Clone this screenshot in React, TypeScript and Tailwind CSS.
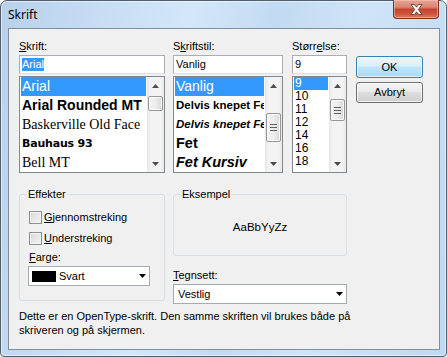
import React from "react";

const sans = "font-['Liberation_Sans',Arial,sans-serif]";
const serif = "font-['Liberation_Serif','Times_New_Roman',serif]";

function Tri({ dir, color = "#4d4d4d" }: { dir: "up" | "down"; color?: string }) {
  return (
    <svg width="7" height="4" viewBox="0 0 7 4">
      {dir === "up" ? <path d="M0 4 L3.5 0 L7 4 Z" fill={color} /> : <path d="M0 0 L7 0 L3.5 4 Z" fill={color} />}
    </svg>
  );
}

function ScrollBar({ thumb, grip }: { thumb: string; grip?: boolean }) {
  return (
    <div className="flex w-[17px] shrink-0 flex-col bg-[linear-gradient(90deg,#e6e6e6_0%,#f3f3f3_20%,#f3f3f3_80%,#e9e9e9_100%)]">
      <div className="flex h-[17px] items-center justify-center">
        <Tri dir="up" />
      </div>
      <div className="flex-1">
        <div
          className={`mx-[1px] flex items-center justify-center rounded-[2px] border border-[#979797] bg-[linear-gradient(90deg,#f4f4f4_0%,#ececec_50%,#d9d9d9_100%)] shadow-[inset_0_0_0_1px_rgba(255,255,255,0.8)] ${thumb}`}
        >
          {grip && (
            <svg width="7" height="7" viewBox="0 0 7 7">
              <path d="M0 0.5H7M0 3.5H7M0 6.5H7" stroke="#5f5f5f" strokeWidth="1" />
            </svg>
          )}
        </div>
      </div>
      <div className="flex h-[17px] items-center justify-center">
        <Tri dir="down" />
      </div>
    </div>
  );
}

function Label({ children, className = "" }: { children: React.ReactNode; className?: string }) {
  return <div className={`h-[13px] text-[11px] leading-[13px] text-black ${className}`}>{children}</div>;
}

function TextBox({ children }: { children: React.ReactNode }) {
  return (
    <div className="mt-[2px] flex h-[19px] items-center border border-[#abadb3] border-b-[#dbdfe6] bg-white pl-[2px] text-[11px] leading-[13px] text-black">
      {children}
    </div>
  );
}

function Combo({ children, className = "" }: { children: React.ReactNode; className?: string }) {
  return (
    <div
      className={`flex h-[20px] items-center justify-between border border-[#a5acb5] bg-white pl-[3px] pr-[3px] text-[11px] leading-[13px] text-black ${className}`}
    >
      <div className="flex items-center">{children}</div>
      <Tri dir="down" color="#000" />
    </div>
  );
}

function CheckRow({ children, className = "" }: { children: React.ReactNode; className?: string }) {
  return (
    <div className={`flex h-[13px] items-center ${className}`}>
      <div className="h-[13px] w-[13px] border border-[#8e8f8f] bg-[linear-gradient(135deg,#d9d9d9_0%,#f2f2f2_100%)] shadow-[inset_0_0_0_1px_#f4f4f4]" />
      <span className="ml-[2px] text-[11px] leading-[13px]">{children}</span>
    </div>
  );
}

export default function App() {
  const fonts = [
    { t: "Arial", c: `${sans} text-[14px]`, sel: true },
    { t: "Arial Rounded MT", c: `${sans} text-[14px] font-bold` },
    { t: "Baskerville Old Face", c: `${serif} text-[14px]` },
    { t: "Bauhaus 93", c: "font-['DejaVu_Sans',sans-serif] text-[11px] font-bold tracking-[-0.2px]" },
    { t: "Bell MT", c: `${serif} text-[14px]` },
  ];
  const styles = [
    { t: "Vanlig", c: "text-[14px]", sel: true },
    { t: "Delvis knepet Fet", c: "text-[11.5px] font-bold" },
    { t: "Delvis knepet Fet Kursiv", c: "text-[11.5px] font-bold italic" },
    { t: "Fet", c: "text-[14.5px] font-bold" },
    { t: "Fet Kursiv", c: "text-[14.5px] font-bold italic" },
  ];
  const sizes = ["9", "10", "11", "12", "14", "16", "18"];

  return (
    <div className={`h-[357px] w-[447px] overflow-hidden bg-white ${sans}`}>
      <div className="flex h-[357px] w-[447px] flex-col rounded-t-[7px] rounded-b-[4px] border border-[#4f5e70] bg-[linear-gradient(100deg,#b8d0ea_0%,#c6ddf4_20%,#d3e7f9_38%,#c2daf2_55%,#cfe4f8_72%,#c0d8f0_100%)] shadow-[inset_0_0_0_1px_rgba(255,255,255,0.55)]">
        {/* title bar */}
        <div className="flex h-[27px] items-start justify-between pl-[7px] pr-[7px]">
          <div className="pt-[6px] font-['Noto_Sans','Open_Sans',sans-serif] text-[12px] leading-[16px] text-black">Skrift</div>
          <div className="flex h-[19px] w-[46px] -mt-[1px] items-center justify-center rounded-b-[4px] border border-t-0 border-[#7b3326] bg-[linear-gradient(180deg,#e6a595_0%,#d98472_40%,#c4452f_52%,#cc523c_75%,#dc7a63_100%)] shadow-[inset_0_0_0_1px_rgba(255,210,200,0.45)]">
            <svg width="13" height="11" viewBox="0 0 13 11">
              <path
                d="M1 0.5H4.5L6.5 3.2L8.5 0.5H12L8.3 5.5L12 10.5H8.5L6.5 7.8L4.5 10.5H1L4.7 5.5Z"
                fill="#ffffff"
                stroke="#50312b"
                strokeWidth="0.8"
                strokeLinejoin="round"
              />
            </svg>
          </div>
        </div>

        {/* client area */}
        <div className="ml-[7px] flex h-[322px] w-[432px] flex-col border border-[#7f8fa2] bg-[#f0f0f0] pl-[10px] pt-[11px] text-black">
          {/* top row */}
          <div className="flex items-start">
            <div className="w-[146px]">
              <Label>
                <span className="underline">S</span>krift:
              </Label>
              <TextBox>
                <span className="bg-[#3399ff] text-white">Arial</span>
              </TextBox>
              <div className="mt-[2px] flex h-[97px] border border-[#828790] bg-white">
                <div className="min-w-0 flex-1 overflow-hidden px-[1px]">
                  {fonts.map((f) => (
                    <div
                      key={f.t}
                      className={`flex h-[19px] items-center whitespace-nowrap pl-[1px] leading-[19px] ${f.c} ${f.sel ? "bg-[#3399ff] text-white" : "text-black"}`}
                    >
                      {f.t}
                    </div>
                  ))}
                </div>
                <ScrollBar thumb="mt-[2px] h-[15px]" />
              </div>
            </div>

            <div className="ml-[8px] w-[110px]">
              <Label>
                S<span className="underline">k</span>riftstil:
              </Label>
              <TextBox>Vanlig</TextBox>
              <div className="mt-[2px] flex h-[97px] border border-[#828790] bg-white">
                <div className="min-w-0 flex-1 overflow-hidden px-[1px]">
                  {styles.map((f) => (
                    <div
                      key={f.t}
                      className={`flex h-[19px] items-center overflow-hidden whitespace-nowrap pl-[1px] leading-[19px] ${f.c} ${f.sel ? "bg-[#3399ff] text-white" : "text-black"}`}
                    >
                      {f.t}
                    </div>
                  ))}
                </div>
                <ScrollBar thumb="mt-[19px] h-[29px]" grip />
              </div>
            </div>

            <div className="ml-[9px] w-[55px]">
              <Label>
                Størr<span className="underline">e</span>lse:
              </Label>
              <TextBox>9</TextBox>
              <div className="mt-[2px] flex h-[97px] border border-[#828790] bg-white">
                <div className="min-w-0 flex-1 overflow-hidden px-[1px]">
                  {sizes.map((s, i) => (
                    <div
                      key={s}
                      className={`flex h-[13px] items-center pl-[1px] text-[12px] leading-[13px] ${i === 0 ? "bg-[#3399ff] text-white" : "text-black"}`}
                    >
                      {s}
                    </div>
                  ))}
                </div>
                <ScrollBar thumb="mt-[5px] h-[22px]" grip />
              </div>
            </div>

            <div className="ml-[9px] flex w-[67px] flex-col pt-[16px]">
              <div className="flex h-[22px] items-center justify-center rounded-[3px] border border-[#3c7fb1] bg-[linear-gradient(180deg,#eaf6fd_0%,#d9f0fc_45%,#bee6fd_50%,#a7d9f5_100%)] text-[11px] shadow-[inset_0_0_0_1px_rgba(255,255,255,0.7)]">
                OK
              </div>
              <div className="mt-[4px] flex h-[21px] items-center justify-center rounded-[3px] border border-[#707070] bg-[linear-gradient(180deg,#f2f2f2_0%,#ebebeb_45%,#dddddd_50%,#cfcfcf_100%)] text-[11px] shadow-[inset_0_0_0_1px_rgba(255,255,255,0.7)]">
                Avbryt
              </div>
            </div>
          </div>

          {/* bottom row */}
          <div className="mt-[15px] flex items-start">
            <fieldset className="w-[146px] rounded-[3px] border border-[#d5dfe5] px-[9px] pb-[14px]">
              <legend className="-ml-[2px] px-[1px] text-[11px] leading-[13px]">Effekter</legend>
              <CheckRow className="mt-[10px]">
                <span className="underline">G</span>jennomstreking
              </CheckRow>
              <CheckRow className="mt-[8px]">
                <span className="underline">U</span>nderstreking
              </CheckRow>
              <Label className="mt-[6px]">
                <span className="underline">F</span>arge:
              </Label>
              <Combo className="mt-[2px] -ml-[1px] w-[122px]">
                <div className="h-[11px] w-[24px] bg-black" />
                <span className="ml-[3px]">Svart</span>
              </Combo>
            </fieldset>

            <div className="ml-[8px] w-[174px]">
              <fieldset className="rounded-[3px] border border-[#d5dfe5]">
                <legend className="ml-[7px] px-[1px] text-[11px] leading-[13px]">Eksempel</legend>
                <div className="flex h-[54px] items-center justify-center pb-[1px] text-[11.5px]">AaBbYyZz</div>
              </fieldset>
              <Label className="mt-[13px]">
                <span className="underline">T</span>egnsett:
              </Label>
              <Combo className="mt-[2px] w-[174px]">
                <span className="ml-[1px]">Vestlig</span>
              </Combo>
            </div>
          </div>

          <div className="mt-[5px] text-[11px] leading-[14px]">
            <div>Dette er en OpenType-skrift. Den samme skriften vil brukes både på</div>
            <div>skriveren og på skjermen.</div>
          </div>
        </div>
      </div>
    </div>
  );
}
